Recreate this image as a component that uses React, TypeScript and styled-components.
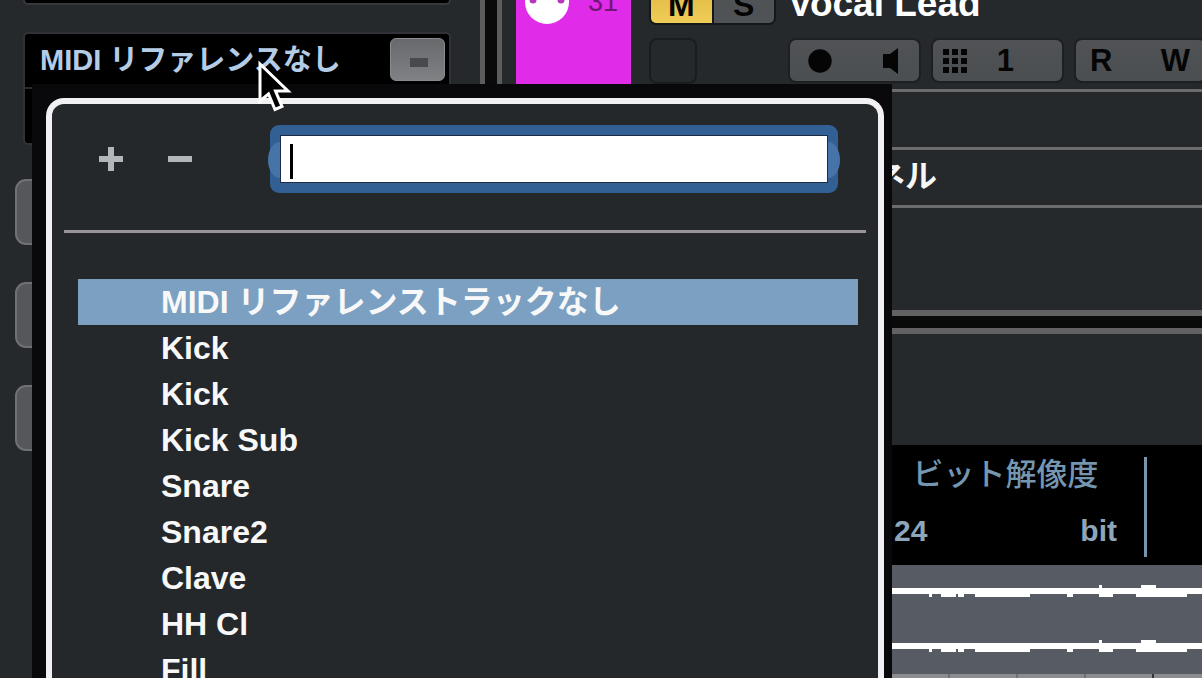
import React from "react";
import styled, { createGlobalStyle } from "styled-components";

const GlobalStyle = createGlobalStyle`
  *, *::before, *::after { box-sizing: border-box; }
  body {
    margin: 0;
    background: #25292c;
    color: #f6f6f6;
    font-family: "Liberation Sans", "Noto Sans CJK JP", sans-serif;
    overflow: hidden;
  }
  button, input { font: inherit; color: inherit; margin: 0; padding: 0; border: 0; }
  ul { list-style: none; margin: 0; padding: 0; }
`;

const Workspace = styled.div`
  position: relative;
  display: flex;
  height: 100vh;
  overflow: hidden;
`;

/* Inspector column */

const Inspector = styled.aside`
  flex: 0 0 480px;
  display: flex;
  flex-direction: column;
  padding: 0 29px 0 15px;
`;

const Slot = styled.div`
  height: 5px;
  margin-left: 8px;
  background: #000;
  border: 2px solid #36383d;
  border-top: 0;
  border-radius: 0 0 5px 5px;
`;

const ReferenceBox = styled.div`
  margin: 27px 0 34px 8px;
  height: 113px;
  background: #000;
  border: 2px solid #303237;
  border-radius: 5px;
`;

const ReferenceRow = styled.div`
  display: flex;
  align-items: center;
  justify-content: space-between;
  height: 55px;
  padding: 0 4px 2px 15px;
  border-bottom: 2px solid #2b2c30;
`;

const ReferenceLabel = styled.span`
  font-size: 29px;
  line-height: 40px;
  font-weight: 700;
  color: #b4cce6;
  white-space: nowrap;
`;

const ClearButton = styled.button`
  display: grid;
  place-items: center;
  width: 55px;
  height: 43px;
  padding: 6px 0 0 2px;
  border-radius: 6px;
  background: linear-gradient(#68696d, #808185);
  border: 1px solid #8a8b8e;
`;

const SectionList = styled.div`
  display: flex;
  flex-direction: column;
  gap: 37px;
`;

const SectionButton = styled.button`
  height: 66px;
  border-radius: 11px;
  background: #56575a;
  border: 2px solid #707174;
`;

const ColumnSplitter = styled.div`
  flex: 0 0 22px;
  background: #0a0a0a;
  border: solid #5b5c5e;
  border-width: 0 5px;
`;

/* Project column */

const Project = styled.main`
  flex: 1;
  min-width: 0;
  display: flex;
  flex-direction: column;
  overflow: hidden;
`;

const Track = styled.section`
  display: flex;
  height: 89px;
  padding-left: 14px;
`;

const TrackColor = styled.div`
  flex: 0 0 115px;
  display: flex;
  justify-content: space-between;
  align-items: flex-start;
  height: 100%;
  padding: 0 13px 0 9px;
  background: #e02be9;
`;

const NumberClip = styled.div`
  display: flex;
  align-items: flex-end;
  height: 17px;
  overflow: hidden;
  font-size: 27px;
  line-height: 30px;
  color: #701676;
`;

const TrackColumn = styled.div<{ $gap: number }>`
  flex: none;
  display: flex;
  flex-direction: column;
  gap: 13px;
  margin-left: ${(p) => p.$gap}px;
`;

const TrackTop = styled.div`
  display: flex;
  align-items: flex-end;
  height: 25px;
  overflow: hidden;
`;

const TrackName = styled.div`
  font-size: 37px;
  line-height: 42px;
  font-weight: 700;
  color: #fff;
  white-space: nowrap;
`;

const MuteSolo = styled.div`
  display: flex;
  gap: 2px;
  width: 127px;
  background: #16171a;
  border: 2px solid #16171a;
  border-radius: 7px;
  overflow: hidden;
`;

const ToggleButton = styled.button<{ $on?: boolean }>`
  flex: 1;
  height: 36px;
  background: ${(p) => (p.$on ? "linear-gradient(#dfb845, #efce57)" : "#505356")};
  color: #050505;
  font-size: 32px;
  line-height: 36px;
  font-weight: 700;
`;

const EmptySlot = styled.div`
  width: 48px;
  height: 46px;
  border: 2px solid #1a1c1f;
  border-radius: 8px;
`;

const ControlRow = styled.div`
  display: flex;
  gap: 10px;
`;

const ControlGroup = styled.div<{ $start: number; $end: number }>`
  flex: none;
  display: flex;
  justify-content: space-between;
  width: 133px;
  height: 45px;
  padding: 0 ${(p) => p.$end}px 0 ${(p) => p.$start}px;
  border: 2px solid #1d1f22;
  border-radius: 8px;
  background: linear-gradient(#505255, #4b4f51);
`;

const ControlButton = styled.button`
  display: grid;
  place-items: center;
  background: none;
  color: #050505;
  font-size: 31px;
  line-height: 40px;
  font-weight: 700;
`;

const ListRow = styled.div`
  height: 58px;
  padding-left: 276px;
  border-top: 3px solid #6a6c6e;
  font-size: 32px;
  line-height: 52px;
  font-weight: 700;
  white-space: nowrap;
`;

const LowerList = styled.div`
  height: 105px;
  border-top: 3px solid #6a6c6e;
`;

const RowSplitter = styled.div`
  flex: none;
  height: 24px;
  background: #0a0a0b;
  border: solid #626264;
  border-width: 6px 0;
`;

const Toolbar = styled.div`
  flex: none;
  height: 111px;
`;

const InfoLine = styled.section`
  flex: none;
  display: flex;
  height: 120px;
  padding: 12px 0 8px 392px;
  background: #000;
  color: #8ea6ba;
`;

const InfoCell = styled.div`
  flex: none;
  display: flex;
  flex-direction: column;
  gap: 20px;
  width: 253px;
  padding-right: 27px;
  border-right: 3px solid #7795ad;
`;

const InfoTitle = styled.div`
  text-align: center;
  font-size: 31px;
  line-height: 36px;
  font-weight: 500;
  color: #7596b0;
`;

const InfoValue = styled.div`
  display: flex;
  justify-content: space-between;
  font-size: 30px;
  line-height: 36px;
  font-weight: 700;
`;

const Overview = styled.section`
  flex: none;
  height: 109px;
  background: #575c64;
  svg { display: block; width: 100%; height: 100%; }
`;

const Ruler = styled.div`
  flex: 1;
  display: flex;
  padding-left: 380px;
  background: #8b8b90;
`;

const RulerCell = styled.div<{ $strong?: boolean }>`
  flex: 0 0 68px;
  border-right: 2px solid ${(p) => (p.$strong ? "#33343a" : "#717177")};
`;

/* Track selection pop-up */

const Popup = styled.div`
  position: absolute;
  top: 84px;
  bottom: 0;
  left: 32px;
  width: 860px;
  display: flex;
  padding: 14px 8px 0 14px;
  background: #09090b;
`;

const PopupFrame = styled.div`
  flex: 1;
  border: 6px solid #f1f1f3;
  border-bottom: 0;
  border-radius: 18px 18px 0 0;
  background: #24282b;
  overflow: hidden;
`;

const PopupHeader = styled.div`
  display: flex;
  align-items: center;
  height: 129px;
  margin: 0 12px;
  padding: 0 28px 16px 35px;
  border-bottom: 3px solid #989499;
`;

const HeaderButton = styled.button`
  display: grid;
  place-items: center;
  width: 24px;
  height: 24px;
  margin-right: 45px;
  background: none;
`;

const SearchField = styled.div`
  position: relative;
  flex: 1;
  margin-left: 33px;
  height: 68px;
  padding: 10px;
  border-radius: 9px;
  background: #325f94;

  &::before, &::after {
    content: "";
    position: absolute;
    top: 17px;
    width: 24px;
    height: 36px;
    border-radius: 50%;
    background: #4774a8;
  }
  &::before { left: -2px; }
  &::after { right: -2px; }
`;

const SearchInput = styled.input`
  position: relative;
  z-index: 1;
  display: block;
  width: 100%;
  height: 48px;
  padding: 0 9px;
  border: 1px solid #1b2c44;
  background: #fff;
  color: #000;
  caret-color: transparent;
  font-size: 32px;
  outline: none;
`;

const Caret = styled.span`
  position: absolute;
  z-index: 2;
  top: 19px;
  left: 20px;
  width: 3px;
  height: 35px;
  background: #000;
`;

const TrackList = styled.ul`
  padding: 46px 20px 0 26px;
`;

const TrackOption = styled.button<{ $selected: boolean }>`
  display: block;
  width: 100%;
  height: 46px;
  padding-left: 83px;
  text-align: left;
  font-size: 32px;
  line-height: 46px;
  font-weight: 700;
  white-space: nowrap;
  color: #f8f8f8;
  background: ${(p) => (p.$selected ? "#7ba0c2" : "transparent")};
`;

const Pointer = styled.svg`
  position: absolute;
  top: 58px;
  left: 257px;
`;

const tracks = [
  "MIDI リファレンストラックなし",
  "Kick",
  "Kick",
  "Kick Sub",
  "Snare",
  "Snare2",
  "Clave",
  "HH Cl",
  "Fill",
];

const waveBumps = [
  [49, 6, 3, 3],
  [61, 6, 15, 3],
  [78, 6, 6, 3],
  [95, 6, 55, 3],
  [187, 6, 6, 3],
  [219, 6, 14, 3],
  [256, 6, 51, 3],
  [219, -3, 3, 3],
  [261, -3, 15, 3],
];

function Channel({ y }: { y: number }) {
  return (
    <g fill="#fff" shapeRendering="crispEdges">
      <rect x="0" y={y} width="100%" height="6" />
      {waveBumps.map(([x, dy, w, h]) => (
        <rect key={`${x}:${dy}`} x={x + 378} y={y + dy} width={w} height={h} />
      ))}
    </g>
  );
}

export default function App() {
  return (
    <>
      <GlobalStyle />
      <Workspace>
        <Inspector>
          <Slot />
          <ReferenceBox>
            <ReferenceRow>
              <ReferenceLabel>MIDI リファレンスなし</ReferenceLabel>
              <ClearButton aria-label="Clear">
                <svg width="18" height="9">
                  <rect width="18" height="9" fill="#48494d" />
                </svg>
              </ClearButton>
            </ReferenceRow>
          </ReferenceBox>
          <SectionList>
            <SectionButton aria-label="Section 1" />
            <SectionButton aria-label="Section 2" />
            <SectionButton aria-label="Section 3" />
          </SectionList>
        </Inspector>
        <ColumnSplitter />
        <Project>
          <Track>
            <TrackColor>
              <svg width="44" height="25" viewBox="0 0 44 25">
                <circle cx="22" cy="2" r="22" fill="#fff" />
                <circle cx="8" cy="0" r="3.5" fill="#b637bd" />
                <circle cx="36" cy="0" r="3.5" fill="#b637bd" />
              </svg>
              <NumberClip>31</NumberClip>
            </TrackColor>
            <TrackColumn $gap={18}>
              <TrackTop>
                <MuteSolo>
                  <ToggleButton $on>M</ToggleButton>
                  <ToggleButton>S</ToggleButton>
                </MuteSolo>
              </TrackTop>
              <EmptySlot />
            </TrackColumn>
            <TrackColumn $gap={12}>
              <TrackTop>
                <TrackName>Vocal Lead</TrackName>
              </TrackTop>
              <ControlRow>
                <ControlGroup $start={18} $end={21}>
                  <ControlButton aria-label="Record">
                    <svg width="24" height="24">
                      <circle cx="12" cy="12" r="11.7" fill="#050505" />
                    </svg>
                  </ControlButton>
                  <ControlButton aria-label="Monitor">
                    <svg width="15" height="26">
                      <path d="M0 6H7L15 0V26L7 20H0Z" fill="#050505" />
                    </svg>
                  </ControlButton>
                </ControlGroup>
                <ControlGroup $start={10} $end={48}>
                  <ControlButton aria-label="Lanes">
                    <svg width="24" height="24">
                      {[0, 9, 18].map((y) =>
                        [0, 9, 18].map((x) => (
                          <rect key={`${x}:${y}`} x={x} y={y} width="6" height="6" fill="#050505" />
                        )),
                      )}
                    </svg>
                  </ControlButton>
                  <ControlButton>1</ControlButton>
                </ControlGroup>
                <ControlGroup $start={14} $end={15}>
                  <ControlButton>R</ControlButton>
                  <ControlButton>W</ControlButton>
                </ControlGroup>
              </ControlRow>
            </TrackColumn>
          </Track>
          <ListRow />
          <ListRow>チャンネル</ListRow>
          <LowerList />
          <RowSplitter />
          <Toolbar />
          <InfoLine>
            <InfoCell>
              <InfoTitle>ビット解像度</InfoTitle>
              <InfoValue>
                <span>24</span>
                <span>bit</span>
              </InfoValue>
            </InfoCell>
          </InfoLine>
          <Overview>
            <svg>
              <Channel y={23} />
              <Channel y={78} />
            </svg>
          </Overview>
          <Ruler>
            <RulerCell />
            <RulerCell />
            <RulerCell />
            <RulerCell $strong />
          </Ruler>
        </Project>

        <Popup>
          <PopupFrame>
            <PopupHeader>
              <HeaderButton aria-label="Expand all">
                <svg width="24" height="24">
                  <path d="M9 0h6v9h9v6h-9v9h-6v-9h-9v-6h9z" fill="#b3b6b9" />
                </svg>
              </HeaderButton>
              <HeaderButton aria-label="Collapse all">
                <svg width="24" height="24">
                  <path d="M0 9h24v6h-24z" fill="#b3b6b9" />
                </svg>
              </HeaderButton>
              <SearchField>
                <SearchInput type="text" aria-label="Search" />
                <Caret />
              </SearchField>
            </PopupHeader>
            <TrackList>
              {tracks.map((name, i) => (
                <li key={i}>
                  <TrackOption $selected={i === 0}>{name}</TrackOption>
                </li>
              ))}
            </TrackList>
          </PopupFrame>
        </Popup>

        <Pointer width="38" height="56" viewBox="0 0 38 56" aria-hidden="true">
          <path
            d="M3 6V43L11.500 36L18 51.500L25 48.500L18.500 33H31Z"
            fill="#000"
            stroke="#fff"
            strokeWidth="3"
          />
        </Pointer>
      </Workspace>
    </>
  );
}
